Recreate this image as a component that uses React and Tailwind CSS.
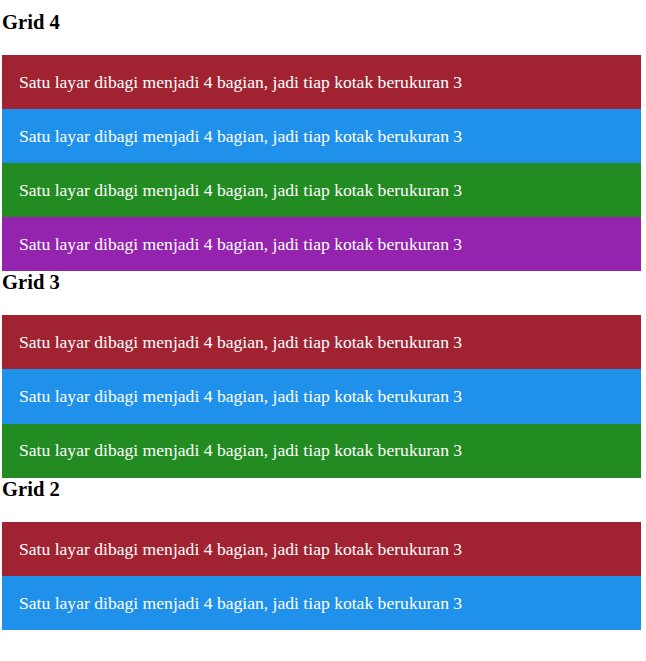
import React from 'react';

const colors = {
    4: ['bg-[#a12332]', 'bg-[#1f91eb]', 'bg-[#228b22]', 'bg-[#9423ae]'],
    3: ['bg-[#a12332]', 'bg-[#1f91eb]', 'bg-[#228b22]'],
    2: ['bg-[#a12332]', 'bg-[#1f91eb]'],
};

const GridSection = ({ n }) => (
    <section>
        <h3 className="text-[20.6px] font-bold leading-[22px] mb-[22px]">Grid {n}</h3>
        <div className="flex flex-col">
            {colors[n].map((c, i) => (
                <div key={i} className={`${c} h-[54.1px] pl-[17px] flex items-center text-white text-[17.6px]`}>
                    Satu layar dibagi menjadi 4 bagian, jadi tiap kotak berukuran 3
                </div>
            ))}
        </div>
    </section>
);

export default function App() {
    return (
        <div className="font-['Liberation_Serif',serif] text-black bg-white pl-[2px] pt-[11px] w-[641px]">
            <GridSection n={4} />
            <GridSection n={3} />
            <GridSection n={2} />
        </div>
    );
}
